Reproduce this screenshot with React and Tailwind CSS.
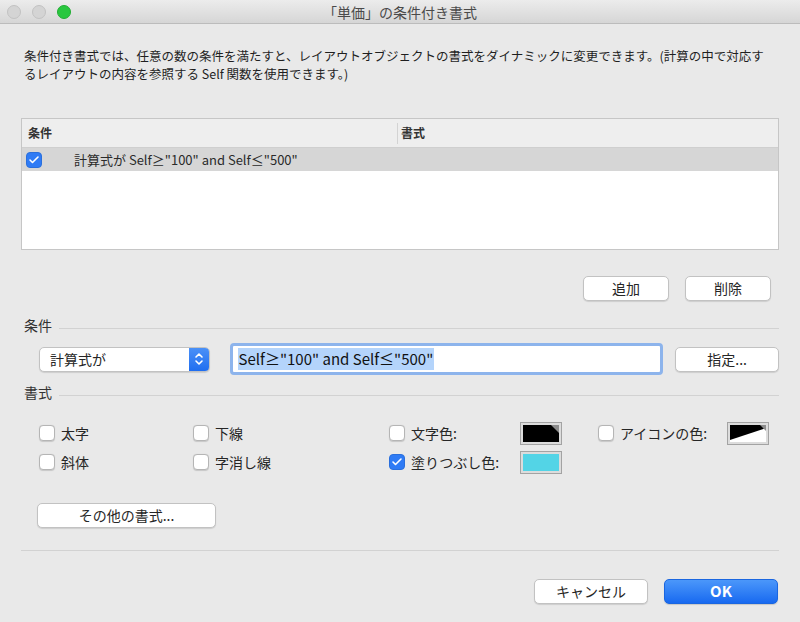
import React from 'react';
import { Check } from 'lucide-react';

const FONT = "font-['Noto_Sans_CJK_JP','Noto_Sans',sans-serif]";

const CheckBox = ({ checked }) => (
  checked ? (
    <span className="w-[16px] h-[16px] rounded-[4px] bg-[#2f7bf5] border border-[#2a6fdc] flex items-center justify-center shrink-0">
      <Check size={12} strokeWidth={3.2} className="text-white" />
    </span>
  ) : (
    <span className="w-[16px] h-[16px] rounded-[4px] bg-white border border-[#b5b5b5] shadow-[0_0.5px_1px_rgba(0,0,0,0.15)] shrink-0" />
  )
);

const Option = ({ label, checked, className = '' }) => (
  <div className={`flex items-center gap-[6px] ${className}`}>
    <CheckBox checked={checked} />
    <span className="text-[14px] leading-none text-[#262626]">{label}</span>
  </div>
);

const ColorWell = ({ children }) => (
  <div className="w-[42px] h-[23px] border border-[#a3a3a3] bg-[#dcdcdc] p-[2px]">
    <div className="relative w-full h-full overflow-hidden">{children}</div>
  </div>
);

const Corner = () => (
  <svg className="absolute right-0 top-0" width="8" height="8" viewBox="0 0 8 8">
    <polygon points="0,0 8,0 8,8" fill="#8c8c8c" />
  </svg>
);

const MacButton = ({ children, className = '' }) => (
  <button className={`h-[25px] rounded-[5px] bg-white border border-[#c2c2c2] shadow-[0_1px_1px_rgba(0,0,0,0.12)] text-[14px] text-[#262626] flex items-center justify-center ${className}`}>
    {children}
  </button>
);

const SectionHeader = ({ label }) => (
  <div className="flex items-center gap-[7px] pl-[3px] h-[18px]">
    <span className="text-[14px] leading-none text-[#333]">{label}</span>
    <div className="flex-1 border-t border-[#d2d2d2] mt-[6px]" />
  </div>
);

const App = () => {
  return (
    <div className={`w-[800px] h-[622px] bg-[#e9e9e9] overflow-hidden ${FONT}`}>
      {/* Title bar */}
      <div className="relative h-[24px] bg-gradient-to-b from-[#ececec] to-[#d6d6d6] border-b border-[#bcbcbc] flex items-center justify-center">
        <div className="absolute left-[7px] top-[5px] flex gap-[11px]">
          <span className="w-[14px] h-[14px] rounded-full bg-[#d4d4d4] border border-[#c2c2c2]" />
          <span className="w-[14px] h-[14px] rounded-full bg-[#d4d4d4] border border-[#c2c2c2]" />
          <span className="w-[14px] h-[14px] rounded-full bg-[#29c73f] border border-[#21ad33]" />
        </div>
        <span className="text-[14px] text-[#4a4a4a] leading-none">「単価」の条件付き書式</span>
      </div>

      <div className="px-[21px]">
        {/* Description */}
        <div className="mt-[23px] pl-[3px] text-[12.5px] leading-[18px] text-[#1f1f1f] whitespace-nowrap">
          <p>条件付き書式では、任意の数の条件を満たすと、レイアウトオブジェクトの書式をダイナミックに変更できます。(計算の中で対応す</p>
          <p>るレイアウトの内容を参照する Self 関数を使用できます。)</p>
        </div>

        {/* Condition table */}
        <div className="mt-[35px] h-[132px] border border-[#c6c6c6] bg-white">
          <div className="h-[29px] bg-[#eeeeee] border-b border-[#cfcfcf] flex items-center text-[12px] font-bold text-[#333]">
            <div className="w-[375px] pl-[6px]">条件</div>
            <div className="h-[21px] border-l border-[#d3d3d3] pl-[3px] flex items-center">書式</div>
          </div>
          <div className="h-[23px] bg-[#d6d6d6] flex items-center pl-[4px]">
            <CheckBox checked />
            <span className="ml-[32px] text-[13px] text-[#2a2a2a]">計算式が Self≥"100" and Self≤"500"</span>
          </div>
        </div>

        {/* Add / Delete */}
        <div className="mt-[26px] flex justify-end gap-[16px] pr-[8px]">
          <MacButton className="w-[86px]">追加</MacButton>
          <MacButton className="w-[86px]">削除</MacButton>
        </div>

        {/* Condition */}
        <div className="mt-[15px]">
          <SectionHeader label="条件" />
        </div>
        <div className="mt-[9px] flex items-center">
          <div className="ml-[18px] w-[171px] h-[25px] rounded-[5px] bg-white border border-[#c2c2c2] shadow-[0_1px_1px_rgba(0,0,0,0.12)] flex items-center overflow-hidden">
            <span className="flex-1 pl-[10px] text-[14px] text-[#262626]">計算式が</span>
            <span className="w-[20px] h-full bg-gradient-to-b from-[#4a90f7] to-[#1f6ef0] flex items-center justify-center">
              <svg width="10" height="16" viewBox="0 0 10 16" fill="none" stroke="white" strokeWidth="1.6" strokeLinecap="round" strokeLinejoin="round">
                <path d="M2 6 L5 3 L8 6" />
                <path d="M2 10 L5 13 L8 10" />
              </svg>
            </span>
          </div>
          <div className="ml-[20px] w-[435px] h-[32px] rounded-[4px] border-[3px] border-[#8db4ec] bg-white flex items-center">
            <div className="ml-[4px] h-[22px] w-[1px]" />
            <span className="bg-[#b4d4fb] text-[15px] leading-[22px] text-[#111] px-[1px]">Self≥"100" and Self≤"500"</span>
          </div>
          <MacButton className="ml-[12px] w-[104px]">指定...</MacButton>
        </div>

        {/* Format */}
        <div className="mt-[8px]">
          <SectionHeader label="書式" />
        </div>
        <div className="mt-[24px] flex flex-col gap-[13px]">
          <div className="flex items-center h-[16px]">
            <Option label="太字" className="ml-[18px] w-[154px]" />
            <Option label="下線" className="w-[196px]" />
            <div className="w-[209px] flex items-center">
              <Option label="文字色:" className="w-[131px]" />
              <ColorWell>
                <div className="w-full h-full bg-black" />
                <Corner />
              </ColorWell>
            </div>
            <div className="flex items-center">
              <Option label="アイコンの色:" className="w-[129px]" />
              <ColorWell>
                <svg className="w-full h-full" viewBox="0 0 36 17" preserveAspectRatio="none">
                  <rect width="36" height="17" fill="white" />
                  <polygon points="0,0 36,0 36,3 0,15" fill="black" />
                  <polygon points="30,0 36,0 36,6" fill="#8c8c8c" />
                </svg>
              </ColorWell>
            </div>
          </div>
          <div className="flex items-center h-[16px]">
            <Option label="斜体" className="ml-[18px] w-[154px]" />
            <Option label="字消し線" className="w-[196px]" />
            <div className="w-[209px] flex items-center">
              <Option label="塗りつぶし色:" checked className="w-[131px]" />
              <ColorWell>
                <div className="w-full h-full bg-[#53d4e6]" />
              </ColorWell>
            </div>
          </div>
        </div>

        <MacButton className="mt-[33px] ml-[16px] w-[179px] h-[24px]">その他の書式...</MacButton>

        <div className="mt-[22px] border-t border-[#d2d2d2]" />

        {/* Footer */}
        <div className="mt-[28px] flex justify-end gap-[16px] pr-[1px]">
          <MacButton className="w-[114px]">キャンセル</MacButton>
          <button className="w-[114px] h-[25px] rounded-[5px] bg-gradient-to-b from-[#4b97fa] to-[#1769f0] border border-[#1a66e0] text-white text-[15px] font-bold flex items-center justify-center shadow-[0_1px_1px_rgba(0,0,0,0.15)]">
            OK
          </button>
        </div>
      </div>
    </div>
  );
};

export default App;
